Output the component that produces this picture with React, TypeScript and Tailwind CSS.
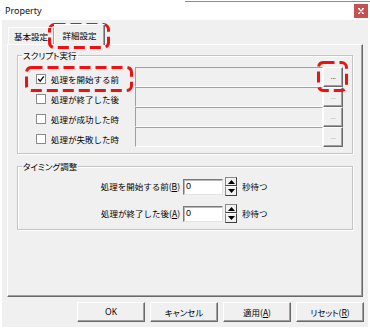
import React from "react";

function Checkbox({ checked }: { checked?: boolean }) {
  return (
    <div className="w-[10px] h-[10px] shrink-0 border border-[#8a8a8a] bg-white flex items-center justify-center">
      {checked && (
        <svg width="8" height="8" viewBox="0 0 8 8">
          <polyline points="1.2,4 3.2,6.2 6.8,1.4" fill="none" stroke="#111" strokeWidth="1.4" />
        </svg>
      )}
    </div>
  );
}

function DotsButton({ enabled }: { enabled?: boolean }) {
  return (
    <div
      className={`w-[20px] h-[20px] shrink-0 flex items-end justify-center pb-[5px] bg-[#f0f0f0] border border-t-white border-l-white border-r-[#696969] border-b-[#696969] shadow-[inset_-1px_-1px_0_#a0a0a0] font-['Liberation_Sans',sans-serif] text-[8px] leading-none tracking-[-0.5px] ${
        enabled ? "text-[#1f2f55]" : "text-[#a8a8a8]"
      }`}
    >
      ...
    </div>
  );
}

function ScriptRow({ label, checked, enabled }: { label: string; checked?: boolean; enabled?: boolean }) {
  return (
    <div className="flex h-[20px]">
      <div className="w-[99px] shrink-0 flex items-center gap-[5px] pt-[4px]">
        <Checkbox checked={checked} />
        <span className="text-[8.5px] leading-none whitespace-nowrap">{label}</span>
      </div>
      <div className="w-[188px] h-[20px] shrink-0 bg-[#f0f0f0] border border-t-[#a0a0a0] border-l-[#a0a0a0] border-r-white border-b-white" />
      <DotsButton enabled={enabled} />
    </div>
  );
}

function Spinner() {
  return (
    <div className="w-[12px] h-[19px] shrink-0 flex flex-col">
      <div className="h-[9px] flex items-center justify-center bg-[#f0f0f0] border border-t-[#8a8a8a] border-l-[#8a8a8a] border-r-[#404040] border-b-[#404040]">
        <svg width="7" height="4" viewBox="0 0 7 4">
          <polygon points="3.5,0 7,4 0,4" fill="#000" />
        </svg>
      </div>
      <div className="h-[10px] flex items-center justify-center bg-[#f0f0f0] border border-t-white border-l-[#8a8a8a] border-r-[#404040] border-b-[#404040]">
        <svg width="7" height="4" viewBox="0 0 7 4">
          <polygon points="0,0 7,0 3.5,4" fill="#000" />
        </svg>
      </div>
    </div>
  );
}

function TimingRow({ label, acc }: { label: string; acc: string }) {
  return (
    <div className="flex h-[19px] items-center">
      <div className="w-[162px] shrink-0 text-right text-[8.5px] leading-none whitespace-nowrap">
        {label}(<span className="underline">{acc}</span>)
      </div>
      <div className="ml-[3px] w-[40px] h-[16px] shrink-0 bg-white border border-t-[#7a7a7a] border-l-[#7a7a7a] border-r-[#e3e3e3] border-b-[#e3e3e3] shadow-[inset_1px_1px_0_#b8b8b8] flex items-center pl-[2px] font-['Liberation_Sans',sans-serif] text-[9px] leading-none">
        0
      </div>
      <div className="ml-[2px]">
        <Spinner />
      </div>
      <span className="ml-[5px] text-[8.5px] leading-none whitespace-nowrap">秒待つ</span>
    </div>
  );
}

function DlgButton({ children }: { children: React.ReactNode }) {
  return (
    <div className="w-[68px] h-[20px] shrink-0 flex items-center justify-center bg-[#f0f0f0] border border-t-white border-l-white border-r-[#696969] border-b-[#696969] shadow-[inset_-1px_-1px_0_#a0a0a0] text-[8.5px] leading-none [font-feature-settings:'palt'] whitespace-nowrap">
      {children}
    </div>
  );
}

export default function App() {
  return (
    <div className="relative w-[370px] h-[329px] bg-white overflow-hidden font-['Noto_Sans_CJK_JP','Noto_Sans',sans-serif] text-black">
      <div className="absolute top-[1px] left-[185px] right-0 h-[1px] bg-[#5b9bd5]" />

      {/* title bar */}
      <div className="flex h-[20px] pl-[5px] pr-[2px]">
        <span className="self-center font-['Noto_Sans',sans-serif] text-[9px] leading-none text-[#111]">Property</span>
        <div className="ml-auto mt-[4px] w-[14px] h-[14px] bg-[#c75050] flex items-center justify-center">
          <svg width="6" height="6" viewBox="0 0 6 6">
            <path d="M0.5 0.5 L5.5 5.5 M5.5 0.5 L0.5 5.5 M0 0.5 H2 M4 0.5 H6 M0 5.5 H2 M4 5.5 H6" stroke="#fff" strokeWidth="1.1" fill="none" />
          </svg>
        </div>
      </div>

      {/* body */}
      <div className="mx-[2px] h-[307px] bg-[#f0f0f0] px-[5px] pt-[4px] flex flex-col">
        {/* tabs */}
        <div className="relative z-10 flex items-end h-[20px]">
          <div className="ml-[1px] h-[17px] px-[5px] flex items-center border-t border-l border-r border-t-white border-l-white border-r-[#a0a0a0] text-[8.5px] leading-none whitespace-nowrap">
            基本設定
          </div>
          <div className="-mb-[1px] h-[21px] w-[51px] flex items-center justify-center bg-[#f0f0f0] border-t border-l border-r border-t-white border-l-white border-r-[#696969] shadow-[inset_-1px_0_0_#a0a0a0] text-[8.5px] leading-none whitespace-nowrap">
            詳細設定
          </div>
        </div>

        {/* tab panel */}
        <div className="h-[253px] border border-t-white border-l-white border-r-[#696969] border-b-[#696969] shadow-[inset_-1px_-1px_0_#a0a0a0] px-[9px] pt-[5px]">
          <fieldset className="border border-[#c4c4c4] shadow-[inset_1px_1px_0_#fff,1px_1px_0_#fff] pb-[6px]">
            <legend className="ml-[4px] px-[1px] text-[8.5px] leading-[10px] [font-feature-settings:'palt']">スクリプト実行</legend>
            <div className="mt-[7px] pl-[18px] flex flex-col">
              <ScriptRow label="処理を開始する前" checked enabled />
              <ScriptRow label="処理が終了した後" />
              <ScriptRow label="処理が成功した時" />
              <ScriptRow label="処理が失敗した時" />
            </div>
          </fieldset>

          <fieldset className="mt-[7px] border border-[#c4c4c4] shadow-[inset_1px_1px_0_#fff,1px_1px_0_#fff] pb-[6px]">
            <legend className="ml-[4px] px-[1px] text-[8.5px] leading-[10px] [font-feature-settings:'palt']">タイミング調整</legend>
            <div className="mt-[6px] flex flex-col gap-[8px]">
              <TimingRow label="処理を開始する前" acc="B" />
              <TimingRow label="処理が終了した後" acc="A" />
            </div>
          </fieldset>
        </div>

        {/* buttons */}
        <div className="mt-[5px] flex gap-[5px] pl-[70px]">
          <DlgButton>
            <span className="font-['Noto_Sans',sans-serif]">OK</span>
          </DlgButton>
          <DlgButton>キャンセル</DlgButton>
          <DlgButton>
            適用(<span className="underline">A</span>)
          </DlgButton>
          <DlgButton>
            リセット(<span className="underline">R</span>)
          </DlgButton>
        </div>
      </div>

      {/* red dashed annotations */}
      <svg className="absolute inset-0 pointer-events-none" width="370" height="329" viewBox="0 0 370 329">
        <g fill="none" stroke="#ee1111" strokeWidth="3" strokeDasharray="11 5">
          <rect x="49.5" y="24.5" width="59" height="23" rx="5" />
          <rect x="26.5" y="67.5" width="105" height="23" rx="5" />
          <rect x="318.5" y="62.5" width="28" height="28" rx="5" />
        </g>
      </svg>
    </div>
  );
}
